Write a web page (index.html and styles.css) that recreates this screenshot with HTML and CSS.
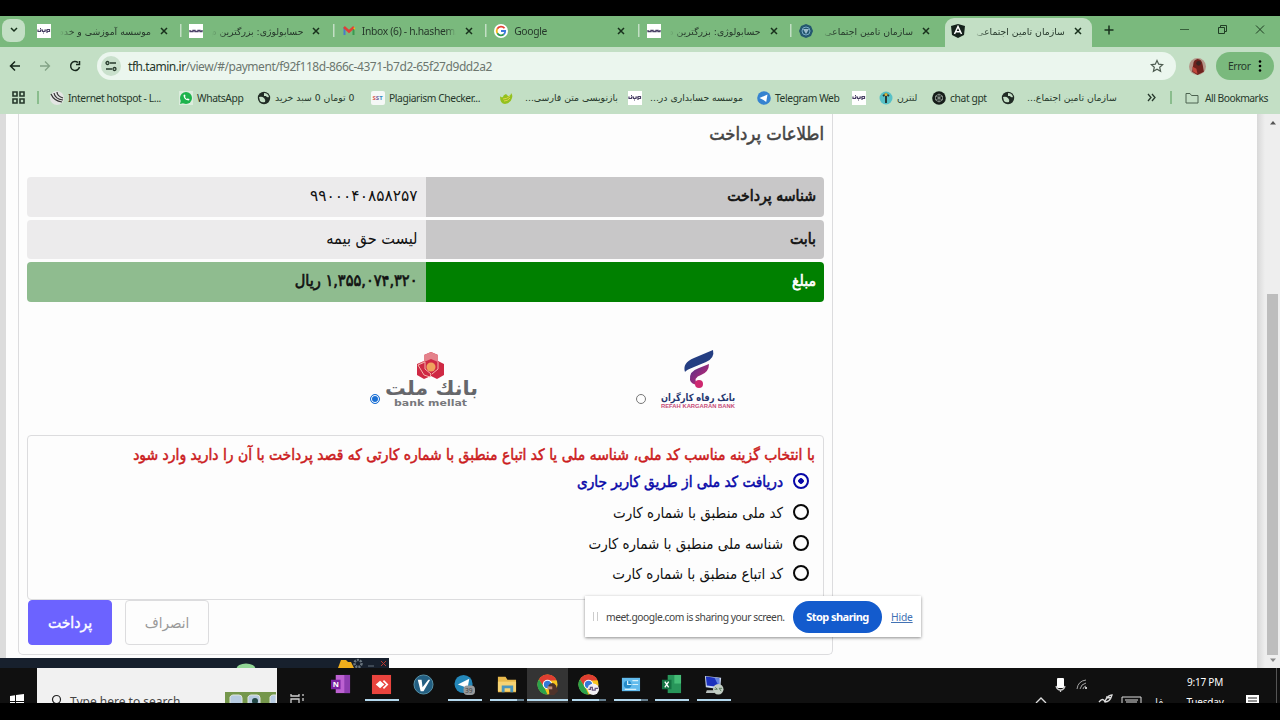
FILE: index.html
```
<!DOCTYPE html>
<html lang="fa">
<head>
	<meta charset="utf-8">
	<title>سازمان تامین اجتماعی</title>
	<link rel="stylesheet" href="styles.css">
</head>
<body>
	<svg class="defs">
		<symbol id="x" viewBox="0 0 8 8"><path d="M1 1l6 6M7 1L1 7" stroke="#18301c" stroke-width="1.5"/></symbol>
		<symbol id="mark" viewBox="0 0 14 14"><path fill="#fff" d="M0 0h14v14H0z"/><path d="M1 5.500v2h2.500V6h2v1.500H8V6h2v3M10 7.500h2.500v-2H10M3 4.500h1M6 9h1" fill="none" stroke="#4a4166" stroke-width="1.200"/></symbol>
		<symbol id="wordmark" viewBox="0 0 14 14"><path fill="#fff" d="M0 0h14v14H0z"/><path d="M1 6v1.500h3V6.500h2v1h3v-1h2v1h2V6" fill="none" stroke="#4a4166" stroke-width="1.300"/></symbol>
		<symbol id="globe" viewBox="0 0 14 14"><circle cx="7" cy="7" r="6.200" fill="#202b24"/><path d="M2 6q3-1 5 1t1 4q-3 1-5-1zM7 2q4 0 5 4-2 1-3-1H7z" fill="#c3dfc5"/></symbol>
		<symbol id="chrome" viewBox="0 0 22 22"><circle cx="11" cy="11" r="10.500" fill="#f7c51e"/><path d="M2 5.500A10.500 10.500 0 0 1 20.500 6.500L11 7 7 14z" fill="#df3e31"/><path d="M2 5.500L8 15l3 6.500A10.500 10.500 0 0 1 2 5.500z" fill="#2ba24c"/><circle cx="11" cy="11" r="5" fill="#fff"/><circle cx="11" cy="11" r="3.800" fill="#3479d8"/></symbol>
	</svg>
	<div class="screen">
		<div class="tabs">
			<div class="tab-menu"><svg width="8" height="6"><path d="M1 1l3 3 3-3" fill="none" stroke="#18301c" stroke-width="1.500"/></svg></div>
			<div class="tab first"><svg class="fav"><use href="#mark"/></svg><span class="title fa">موسسه آموزشی و خدم</span><svg class="x"><use href="#x"/></svg></div>
			<div class="tab"><svg class="fav"><use href="#wordmark"/></svg><span class="title fa">حسابولوژی: بزرگترین م</span><svg class="x"><use href="#x"/></svg></div>
			<div class="tab"><svg class="fav" viewBox="0 0 14 14"><path d="M2.500 11V3" stroke="#4a7bc8" stroke-width="2"/><path d="M11.500 11V3" stroke="#3a9a51" stroke-width="2"/><path d="M2 3l5 4.500L12 3" fill="none" stroke="#df4036" stroke-width="2.500"/><path d="M11 4l2-1v3" fill="#edb61e"/></svg><span class="title">Inbox (6) - h.hashem.</span><svg class="x"><use href="#x"/></svg></div>
			<div class="tab"><svg class="fav" viewBox="0 0 14 14"><circle cx="7" cy="7" r="7" fill="#fff"/><path d="M10.500 4.300A4.300 4.300 0 0 0 3.300 4.800" fill="none" stroke="#e44335" stroke-width="1.800"/><path d="M3.300 4.800a4.300 4.300 0 0 0 0 4.500" fill="none" stroke="#f3b81c" stroke-width="1.800"/><path d="M3.300 9.300a4.300 4.300 0 0 0 6.500 1" fill="none" stroke="#319b50" stroke-width="1.800"/><path d="M9.800 10.300Q11.300 9 11.200 7H7" fill="none" stroke="#3c79dc" stroke-width="1.800"/></svg><span class="title">Google</span><svg class="x"><use href="#x"/></svg></div>
			<div class="tab"><svg class="fav"><use href="#wordmark"/></svg><span class="title fa">حسابولوژی: بزرگترین م</span><svg class="x"><use href="#x"/></svg></div>
			<div class="tab"><svg class="fav" viewBox="0 0 14 14"><path d="M7 0l5 2 2 5-2 5-5 2-5-2-2-5 2-5z" fill="#24576f"/><circle cx="7" cy="7" r="4" fill="none" stroke="#78a9c7"/><path d="M4 5h6L7 10z" fill="#9bbccc"/></svg><span class="title fa">سازمان تامین اجتماعی</span><svg class="x"><use href="#x"/></svg></div>
			<div class="tab active"><svg class="fav" viewBox="0 0 14 14"><path d="M7 0l7 2-1 9-6 3-6-3-1-9z" fill="#15221c"/><path d="M3.500 10L7 2.500l3.500 7.500M5 7.700h4" fill="none" stroke="#fff" stroke-width="1.500"/></svg><span class="title fa">سازمان تامین اجتماعی</span><svg class="x"><use href="#x"/></svg></div>
			<svg class="newtab" viewBox="0 0 10 10"><path d="M5 .5v9M.5 5h9" stroke="#18301c" stroke-width="1.500"/></svg>
			<svg class="winbtns" width="84" height="12"><path d="M-1 5.500h9" stroke="#37603b"/><path d="M37.500 3.500h6v6h-6zM39.500 3V1.500h6v6H44M75 1.500l8 8M83 1.500l-8 8" fill="none" stroke="#203d24"/></svg>
		</div>
		<div class="toolbar">
			<svg class="nav" width="76" height="14"><path d="M11 7H1.500M6 2.500L1.500 7 6 11.500" fill="none" stroke="#15261a" stroke-width="1.500"/><path d="M31 7h9.500M36 2.500L40.500 7 36 11.500" fill="none" stroke="#83a386" stroke-width="1.300"/><path d="M69 3.500a4.500 4.500 0 1 0 1.500 4.500M70.500 2v3.500H67" fill="none" stroke="#15261a" stroke-width="1.500"/></svg>
			<div class="omnibox">
				<div class="site"><svg width="12" height="12"><path d="M5 3h6M1 9h6" stroke="#26382b" stroke-width="1.400"/><circle cx="2.500" cy="3" r="1.500" fill="none" stroke="#26382b" stroke-width="1.300"/><circle cx="9.500" cy="9" r="1.500" fill="none" stroke="#26382b" stroke-width="1.300"/></svg></div>
				<span class="url"><b>tfh.tamin.ir</b>/view/#/payment/f92f118d-866c-4371-b7d2-65f27d9dd2a2</span>
				<svg class="star" viewBox="0 0 14 14"><path d="M7 1.500l1.700 3.700 4 .4-3 2.700.9 4L7 10.200l-3.600 2.100.9-4-3-2.700 4-.4z" fill="none" stroke="#4d5b50" stroke-width="1.200"/></svg>
			</div>
			<svg class="avatar" viewBox="0 0 16 16"><circle cx="8" cy="8" r="8" fill="#b5998b"/><path d="M4 6q0-4 4-5 4 0 5 6l1 6-6 3-5-3z" fill="#70231e"/><circle cx="9" cy="5" r="2.200" fill="#3b2422"/><path d="M3 8l4 2 1 5-4-2z" fill="#c0483c"/></svg>
			<div class="error">Error<svg width="4" height="14"><circle cx="2" cy="2.500" r="1.300"/><circle cx="2" cy="7" r="1.300"/><circle cx="2" cy="11.500" r="1.300"/></svg></div>
		</div>
		<div class="bookmarks">
			<svg class="apps" width="13" height="13"><path d="M1 1h4v4H1zM8 1h4v4H8zM1 8h4v4H1zM8 8h4v4H8z" fill="none" stroke="#26382b" stroke-width="1.600"/></svg>
			<i class="line"></i>
			<div class="bm"><svg viewBox="0 0 14 14"><circle cx="7" cy="7" r="7" fill="#e3e5e3"/><path d="M1 3q3 7 11 8M4 2q1 6 9 7M7 1q0 4 6 6" fill="none" stroke="#333" stroke-width="1.200"/></svg><span>Internet hotspot - L...</span></div>
			<div class="bm"><svg viewBox="0 0 14 14"><path d="M0 0h14v14H0z" fill="#dcecdd"/><circle cx="7" cy="7" r="6" fill="#1db34c"/><path d="M1 13l1-4 3 3z" fill="#1db34c"/><path d="M4.500 4q0 5 5.500 5.500l.5-1.500L8.500 7.500 7.500 8 6 6l.5-1L6 3.500z" fill="#fff"/></svg><span>WhatsApp</span></div>
			<div class="bm"><svg><use href="#globe"/></svg><span class="fa">0 تومان 0 سبد خرید</span></div>
			<div class="bm"><svg viewBox="0 0 14 14"><rect width="14" height="14" rx="2" fill="#f5f8f6"/><text x="1.500" y="9" class="sst"><tspan fill="#d55c54">S</tspan><tspan fill="#726399">S</tspan><tspan fill="#368ac0">T</tspan></text></svg><span>Plagiarism Checker...</span></div>
			<div class="bm wide"><svg viewBox="0 0 14 14"><path d="M1 5q1 2 3 1 0-2 3-3l2 2q3 0 3-3 2 2 1 5-1 5-7 6-5 0-5-8z" fill="#94c11f"/><path d="M4 8q4 0 7-3M5 10q4 0 6-3" fill="none" stroke="#e0d34b"/></svg><span class="fa">بازنویسی متن فارسی...</span></div>
			<div class="bm mid"><svg><use href="#mark"/></svg><span class="fa">موسسه حسابداری در...</span></div>
			<div class="bm"><svg viewBox="0 0 14 14"><circle cx="7" cy="7" r="6.800" fill="#3583d0"/><path d="M2.500 7l8-3.500-1.300 7.500-2.700-2z" fill="#fff"/></svg><span>Telegram Web</span></div>
			<div class="bm"><svg><use href="#mark"/></svg></div>
			<div class="bm"><svg viewBox="0 0 14 14"><circle cx="7" cy="7" r="6.500" fill="#58c1c7"/><path d="M7 3v9M4 5l3-2 3 2" fill="none" stroke="#253c3b" stroke-width="2"/><circle cx="7" cy="3.500" r="1.500" fill="#dbb83d"/></svg><span class="fa">لنترن</span></div>
			<div class="bm"><svg viewBox="0 0 14 14"><circle cx="7" cy="7" r="6.800" fill="#151d19"/><path d="M7 3l3.500 2v4L7 11 3.500 9V5zM4 5l6 4M10 5L4 9M7 3v8" fill="none" stroke="#a7b1aa" stroke-width=".7"/></svg><span>chat gpt</span></div>
			<div class="bm wide"><svg><use href="#globe"/></svg><span class="fa">سازمان تامین اجتماع...</span></div>
			<svg width="9" height="9"><path d="M1 1l3 3.500L1 8M5 1l3 3.500L5 8" fill="none" stroke="#26382b" stroke-width="1.300"/></svg>
			<i class="line"></i>
			<svg width="14" height="12"><path d="M1 1.500h4l1.500 2H13v7.500H1z" fill="none" stroke="#4c6350"/></svg>
			<span class="all">All Bookmarks</span>
		</div>
		<div class="page">
			<main class="card" dir="rtl">
				<h1>اطلاعات پرداخت</h1>
				<div class="row"><div class="name">شناسه پرداخت</div><div class="value number">۹۹۰۰۰۴۰۸۵۸۲۵۷</div></div>
				<div class="row"><div class="name">بابت</div><div class="value">لیست حق بیمه</div></div>
				<div class="row total"><div class="name">مبلغ</div><div class="value">۱,۳۵۵,۰۷۴,۳۲۰ ریال</div></div>
				<div class="banks">
					<label class="bank refah">
						<svg width="76" height="62" direction="ltr">
							<defs><linearGradient id="rg" x2="1" y2="1"><stop stop-color="#4a338c"/><stop offset="1" stop-color="#d9246d"/></linearGradient></defs>
							<path d="M25 23Q22 14 34 9L53 1q2 8-7 12L34 18q-8 3-9 5z" fill="#243e82"/>
							<path d="M30 31q-1-9 9-12l10-4q0 8-8 11-8 2-4 10-6-1-7-5z" fill="url(#rg)"/><circle cx="39" cy="35" r="4" fill="#ce286f"/>
							<text x="1" y="52" textLength="74" lengthAdjust="spacingAndGlyphs" class="refah-fa">بانک رفاه کارگران</text>
							<text x="1" y="59" textLength="74" lengthAdjust="spacingAndGlyphs" class="refah-en">REFAH KARGARAN BANK</text>
						</svg>
						<span class="radio"></span>
					</label>
					<label class="bank mellat">
						<svg width="96" height="60" direction="ltr">
							<path d="M40 3l7-3 7 3v6l6 3v11l-7 4-6-3-7 3-7-4V12l7-3z" fill="#cf2944"/><path d="M40 3l7-3 7 3v7l-7-3-7 3-7 3 7-4z" fill="#e4828b"/><path d="M34 13l7-3v7l6 5-1 3-6-2zM54 10v7l-6 5" fill="none" stroke="#f4b4ac"/><circle cx="47" cy="15" r="4.500" fill="#f0a35d"/>
							<text x="1" y="43" textLength="93" lengthAdjust="spacingAndGlyphs" class="mellat-fa">بانك ملت</text>
							<text x="10" y="54" textLength="73" lengthAdjust="spacingAndGlyphs" class="mellat-en">bank mellat</text>
						</svg>
						<span class="radio on"></span>
					</label>
				</div>
				<div class="codes">
					<p>با انتخاب گزینه مناسب کد ملی، شناسه ملی یا کد اتباع منطبق با شماره کارتی که قصد پرداخت با آن را دارید وارد شود</p>
					<label class="code on"><i></i><span>دریافت کد ملی از طریق کاربر جاری</span></label>
					<label class="code"><i></i><span>کد ملی منطبق با شماره کارت</span></label>
					<label class="code"><i></i><span>شناسه ملی منطبق با شماره کارت</span></label>
					<label class="code"><i></i><span>کد اتباع منطبق با شماره کارت</span></label>
				</div>
				<div class="actions"><button class="cancel">انصراف</button><button class="pay">پرداخت</button></div>
			</main>
			<div class="scroll"><svg width="8" height="5"><path d="M1 4.500h6L4 1z" fill="#555"/></svg><i></i><svg width="8" height="5"><path d="M1 .5h6L4 4z" fill="#888"/></svg></div>
			<div class="share"><i class="grip"></i><span>meet.google.com is sharing your screen.</span><b>Stop sharing</b><a>Hide</a></div>
			<svg class="recorder" width="389" height="10"><path d="M0 0h389v10H0z" fill="#17202d"/><ellipse cx="246" cy="11" rx="9.500" ry="5.500" fill="#92d695"/><path d="M338 10l3-8h5l2 2h3l3 6z" fill="#f0ae1c"/><circle cx="358" cy="5.500" r="3.500" fill="none" stroke="#6b7780" stroke-width="2.500" stroke-dasharray="2 1"/><path d="M368 8h6" stroke="#65717d"/><path d="M381 3l5 5M386 3l-5 5" stroke="#b8382f"/></svg>
		</div>
		<div class="taskbar">
			<svg class="start" width="37" height="35"><path d="M10 28l5-.8V33h-5zM16 27l8-1v7h-8zM10 34h5v5h-5zM16 34h8v6h-8z" fill="#fff"/></svg>
			<div class="search"><svg class="lens" width="12" height="14"><circle cx="6.500" cy="5.500" r="4" fill="none" stroke="#222" stroke-width="1.200"/><path d="M4 9l-3 4" stroke="#222"/></svg><span>Type here to search</span><svg width="51" height="12"><path d="M0 0h51v12H0z" fill="#75974c"/><path d="M5 12V5q1-2 3-2h6q3 0 3 3v6zM23 12V5q1-2 3-2h6q3 0 3 3v6zM45 12V5q1-2 3-2h3v9z" fill="#b7cbe1" stroke="#e1e6df"/><circle cx="30" cy="9" r="3" fill="#234846"/></svg></div>
			<svg class="taskview" width="16" height="10"><path d="M1 0v2h8V0M1 10V5h8v5M13 0v2M13 4v3M13 9v2" fill="none" stroke="#d0d0d0" stroke-width="1.300"/></svg>
			<div class="apps-run">
				<div class="app idle"><svg viewBox="0 0 22 22"><path d="M6 1h15v19H6z" fill="#bc61d1"/><path d="M15 1h6v19h-6z" fill="#8e3db0"/><path d="M1 6h10v10H1z" fill="#7922a0"/><text x="3" y="14" class="on-n">N</text></svg></div>
				<div class="app"><svg viewBox="0 0 22 22"><path d="M1 1h20v20H1z" fill="#e9443e"/><path d="M5 11l4.500-4 4.500 4-4.500 4z" fill="#fff"/><path d="M13 7l4 4-4 4" fill="none" stroke="#fff" stroke-width="1.800"/></svg></div>
				<div class="app idle"><svg viewBox="0 0 22 22"><circle cx="11" cy="11" r="10" fill="#235f82" stroke="#5994aa"/><path d="M5 6h4l1 8 6-8h2l-7 12H8z" fill="#fff"/></svg></div>
				<div class="app"><svg viewBox="0 0 22 22"><circle cx="10" cy="10.500" r="9.500" fill="#2487b9"/><path d="M4 11l12-6-2 11-4-3z" fill="#fff"/><rect x="10" y="12" width="12" height="10" rx="4" fill="#979a9c"/><text x="11.500" y="20" class="badge">39</text></svg></div>
				<div class="app two"><svg viewBox="0 0 22 22"><path d="M2 3h8l2 3h9v13H2z" fill="#e8b94c"/><path d="M2 8h19v10H2z" fill="#f6d373"/><path d="M6 12h12v7h-3v-4H9v4H6z" fill="#4a96be"/></svg></div>
				<div class="app current"><svg viewBox="0 0 22 22"><use href="#chrome"/><path d="M12 12q4-5 8 0l2 6-4 4h-5z" fill="#4f332b"/><path d="M11 13h5v3h-5z" fill="#c18c78"/></svg></div>
				<div class="app two"><svg viewBox="0 0 22 22"><use href="#chrome"/><circle cx="16" cy="16" r="6" fill="#f3f0f3"/><path d="M11 16h2v-2h2v3h3v-2h3" fill="none" stroke="#65547c" stroke-width="1.300"/></svg></div>
				<div class="app two"><svg viewBox="0 0 22 22"><path d="M2 4h19v14H2z" fill="#62bbed"/><circle cx="8" cy="11" r="4" fill="#268bc8"/><path d="M8 7v4h4M13 7h6M13 11h6M5 16h12" fill="none" stroke="#d4f0fa" stroke-width="1.300"/></svg></div>
				<div class="app"><svg viewBox="0 0 22 22"><path d="M7 1h14v19H7z" fill="#28965a"/><path d="M14 1h7v9h-7z" fill="#45bd76"/><path d="M1 6h10v10H1z" fill="#147342"/><path d="M4 8l4 6M8 8l-4 6" stroke="#fff" stroke-width="1.400"/></svg></div>
				<div class="app"><svg viewBox="0 0 22 22"><path d="M2 2l17 2-1 12-15-2z" fill="#c8d6f0"/><path d="M3 2.500l14 2v9L4 12z" fill="#1c31bd"/><path d="M12 4l5 .5v9z" fill="#6585df"/><path d="M4 17h9l-1 3H3z" fill="#b8c0bd"/><circle cx="16" cy="16" r="5.500" fill="#c3cec4"/><path d="M12 16h3l-2-2M20 15h-3l2 3" fill="none" stroke="#567a58"/></svg></div>
			</div>
			<svg class="tray" width="136" height="35">
				<rect x="28" y="10" width="7" height="10" rx="1" fill="#fff"/><path d="M27 18q1 4 4.500 4t4.500-4M31.500 22v2" fill="none" stroke="#ccc" stroke-width="1.300"/>
				<path d="M48 21q1-8 9-9M51 21q1-5 6-6M54 21q0-2 3-3" fill="none" stroke="#a5a5a5"/><circle cx="57" cy="20" r="1" fill="#fff"/>
				<path d="M7 35l5-5 5 5M70 34q4-5 6 0 5 0 7-7-4 0-7 6M77 29l5 1" fill="none" stroke="#ddd" stroke-width="1.300"/><path d="M93 36v-7h19v7M96 32h13M97 34h11" fill="none" stroke="#ddd"/><text x="126" y="38" class="lang">فا</text>
			</svg>
			<div class="clock"><span>9:17 PM</span><span>Tuesday</span></div>
			<svg class="note" width="37" height="35"><path d="M3 27h13v10H3z" fill="#fff"/><path d="M5 30h9M5 33h9" stroke="#222"/><path d="M33.500 0v35" stroke="#555"/></svg>
		</div>
	</div>
</body>
</html>
```
FILE: styles.css
```
* {
	box-sizing: border-box;
}

body {
	margin: 0;
	height: 720px;
	padding: 16px 0 17px;
	background: #000;
	overflow: hidden;
	font-family: "Noto Sans", "Open Sans", sans-serif;
	font-size: 10.3px;
	letter-spacing: -.4px;
	color: #26382b;
}

svg {
	display: block;
	flex: none;
}

.defs {
	position: absolute;
	width: 0;
	height: 0;
}

.fa {
	font-family: "DejaVu Sans", sans-serif;
	letter-spacing: 0;
	direction: rtl;
}

.screen {
	width: 1280px;
	height: 687px;
	display: flex;
	flex-direction: column;
	overflow: hidden;
}

/* browser */
.tabs {
	height: 31px;
	flex: none;
	display: flex;
	align-items: center;
	background: #7ab97d;
	padding-left: 2px;
}

.tab-menu {
	width: 23px;
	height: 23px;
	margin: 0 3px 3px 0;
	border-radius: 8px;
	background: #c3dfc5;
	display: flex;
	align-items: center;
	justify-content: center;
}

.tab {
	width: 152.4px;
	height: 28px;
	flex: none;
	display: flex;
	align-items: center;
	padding: 0 0 1px 9px;
	background: linear-gradient(#c3dfc5, #c3dfc5) 0 6px / 1.5px 13px no-repeat;
}

.tab.first {
	background: none;
}

.tab .fav {
	width: 14px;
	height: 14px;
}

.title {
	width: 94px;
	margin: 0 9px 0 6px;
	white-space: nowrap;
	letter-spacing: -.3px;
	-webkit-mask-image: linear-gradient(to left, transparent, #000 10px);
}

.title.fa {
	width: 91px;
	margin: 0 9px;
	font-size: 9.3px;
	letter-spacing: 0;
	-webkit-mask-image: linear-gradient(to right, transparent, #000 14px);
}

.tab .x {
	width: 8px;
	height: 8px;
}

.tab.active {
	width: 147px;
	height: 29px;
	margin: 2px 0 0 2.500px;
	padding: 0 0 3px 6px;
	border-radius: 9px 9px 0 0;
	background: #c3dfc5;
}

.newtab {
	width: 10px;
	height: 10px;
	margin: 0 67px 3px 12px;
}

.winbtns {
	margin-bottom: 3px;
	overflow: visible;
}

.toolbar {
	height: 36px;
	flex: none;
	display: flex;
	align-items: center;
	padding: 2px 5px 0 9px;
	background: #c3dfc5;
}

.nav {
	margin-right: 12px;
}

.omnibox {
	width: 1079px;
	height: 28px;
	border-radius: 14px;
	background: #ebf6ee;
	display: flex;
	align-items: center;
	padding: 0 12px 0 4px;
}

.site {
	width: 20px;
	height: 20px;
	border-radius: 50%;
	background: #c9e0cc;
	display: flex;
	align-items: center;
	justify-content: center;
}

.url {
	margin-left: 7px;
	flex: 1;
	font-size: 12px;
	letter-spacing: -.45px;
	color: #6c766f;
}

.url b {
	font-weight: 400;
	color: #26382b;
}

.star {
	width: 14px;
	height: 14px;
}

.avatar {
	width: 17px;
	height: 17px;
	margin: 0 10px 0 13px;
}

.error {
	width: 58px;
	height: 28px;
	border-radius: 14px;
	background: #7ab97d;
	display: flex;
	align-items: center;
	justify-content: space-between;
	padding: 0 12px;
}

.bookmarks {
	height: 31px;
	flex: none;
	display: grid;
	grid-template-columns: 25px 13px 129px 78px 114px 128px 129px 129px 95px 27px 53px 69px 146px 23px 15px 20px 1fr;
	align-items: center;
	padding: 0 0 2px 12px;
	background: #c3dfc5;
}

.line {
	width: 1.5px;
	height: 13px;
	background: #8abd8d;
}

.bm {
	display: flex;
	align-items: center;
	gap: 4px;
	white-space: nowrap;
}

.bm svg {
	width: 14px;
	height: 14px;
}

.bm .fa {
	font-size: 9.300px;
}

.bm.wide {
	gap: 12px;
}

.bm.mid {
	gap: 8px;
}

.sst {
	font-size: 6px;
	font-weight: 700;
	letter-spacing: 0;
}

.all {
	letter-spacing: -.500px;
}

/* payment page */
.page {
	position: relative;
	height: 554px;
	flex: none;
	background: #fdfdfd;
	border-left: 6px solid #dcdcdc;
	display: flex;
	justify-content: space-between;
	padding-left: 12px;
}

.card {
	width: 815px;
	height: 541px;
	border: 1px solid #dcdcde;
	border-top: 0;
	border-radius: 0 0 5px 5px;
	padding: 0 8px;
	font-family: "DejaVu Sans Condensed", "DejaVu Sans", sans-serif;
	letter-spacing: 0;
	color: #111;
	font-size: 15px;
}

h1 {
	height: 63px;
	margin: 0;
	padding-top: 8px;
	line-height: 24px;
	font-size: 18.300px;
	font-weight: 400;
	-webkit-text-stroke: .5px;
	color: #444;
}

.row {
	height: 39.500px;
	margin-bottom: 3px;
	display: flex;
	line-height: 38px;
	border-radius: 4px;
	overflow: hidden;
}

.name,
.value {
	width: 50%;
	padding: 0 8px;
	background: #c8c7c8;
	font-size: 15.700px;
	-webkit-text-stroke: .6px;
}

.value {
	background: #ecebec;
	font-size: 16.200px;
	-webkit-text-stroke: 0;
}

.value.number {
	font-family: "DejaVu Sans", sans-serif;
	font-size: 15.400px;
}

.total .name {
	background: #008000;
	color: #fff;
}

.total .value {
	background: #8fbc8f;
	-webkit-text-stroke: .6px;
}

.banks {
	height: 130.500px;
	display: flex;
	padding: 45px 88px 0 0;
	gap: 156px;
}

.bank {
	display: flex;
	height: 60px;
	align-items: flex-end;
	gap: 14px;
}

.refah svg {
	margin-bottom: -1px;
}

.mellat {
	gap: 4px;
}

.mellat svg {
	margin-bottom: -2px;
}

.radio {
	width: 10px;
	height: 10px;
	margin-bottom: 6px;
	border: 1px solid #777;
	border-radius: 50%;
}

.radio.on {
	border-color: #1b70d4;
	background: #1b70d4;
	box-shadow: inset 0 0 0 1px #fff;
}

.refah-fa {
	font: 700 10px "DejaVu Sans", sans-serif;
	fill: #24356f;
}

.refah-en {
	font: 700 5.500px "Liberation Sans", sans-serif;
	fill: #c74b78;
}

.mellat-fa {
	font: 700 20px "DejaVu Sans", sans-serif;
	fill: #66676b;
}

.mellat-en {
	font: 700 9px "DejaVu Sans", sans-serif;
	fill: #77787c;
}

.codes {
	height: 165px;
	border: 1px solid #dcdcde;
	border-radius: 4px;
	padding: 8px;
}

.codes p {
	margin: 0 0 3px;
	line-height: 22px;
	height: 23px;
	font-size: 15.480px;
	-webkit-text-stroke: .5px;
	color: #cb1b20;
	white-space: nowrap;
}

.code {
	height: 30.800px;
	display: flex;
	gap: 10px;
	padding-right: 6px;
	line-height: 25px;
}

.code i {
	width: 16px;
	height: 16px;
	margin-top: 3px;
	border: 2.500px solid #080808;
	border-radius: 50%;
}

.code.on {
	color: #0808a8;
	font-size: 15.200px;
	-webkit-text-stroke: .5px;
}

.code.on i {
	border-color: #0808a8;
	background: radial-gradient(#0808a8 2.5px, transparent 3px);
}

.actions {
	direction: ltr;
	display: flex;
	flex-direction: row-reverse;
	justify-content: flex-end;
	gap: 13px;
	padding-left: 1px;
}

button {
	width: 84px;
	height: 45px;
	border-radius: 4px;
	border: 1px solid #dcdcde;
	background: #fdfdfd;
	color: #999;
	font: 15px "DejaVu Sans Condensed", "DejaVu Sans", sans-serif;
}

.pay {
	border-color: #6c63ff;
	background: #6c63ff;
	color: #fff;
	font-size: 15.600px;
	-webkit-text-stroke: .4px;
}

.scroll {
	width: 23px;
	display: flex;
	flex-direction: column;
	align-items: flex-end;
	padding: 6px 3px 5px 0;
	background: linear-gradient(to right, #d8d8d8, #eee 8px);
}

.scroll i {
	width: 11px;
	height: 361px;
	margin: auto -1px 3px 0;
	background: #bdbdbd;
}

.share {
	position: absolute;
	left: 579px;
	top: 482px;
	width: 336px;
	height: 41px;
	background: #fff;
	box-shadow: 0 1px 3px rgba(0, 0, 0, .45);
	display: flex;
	align-items: center;
	padding-left: 8px;
	white-space: nowrap;
	color: #444;
}

.grip {
	width: 5px;
	height: 9px;
	margin-right: 8px;
	border: solid #ccc;
	border-width: 0 1.5px;
}

.share span {
	width: 187px;
	letter-spacing: -.46px;
}

.share b {
	width: 89px;
	height: 32px;
	border-radius: 16px;
	background: #135bcd;
	color: #fff;
	font-size: 11px;
	letter-spacing: -.55px;
	line-height: 31px;
	text-align: center;
}

.share a {
	margin-left: 9px;
	letter-spacing: -.2px;
	color: #4272b4;
	text-decoration: underline;
}

.recorder {
	position: absolute;
	left: -6px;
	bottom: 0;
}

/* windows taskbar */
.taskbar {
	height: 35px;
	display: flex;
	background: #101010;
	color: #fff;
	overflow: hidden;
	letter-spacing: 0;
}

.search {
	width: 240px;
	background: #f1f1f1;
	color: #444;
	display: flex;
	align-items: flex-start;
	font-size: 12px;
	padding-left: 13px;
}

.search span {
	width: 118px;
	margin: 25px 37px 0 8px;
	line-height: 17px;
	white-space: nowrap;
}

.search svg {
	margin-top: 24px;
}

.search .lens {
	margin-top: 26px;
}

.taskview {
	margin: 26px 15px 0 13px;
}

.apps-run {
	display: flex;
	width: 413px;
	margin-left: -1px;
}

.app {
	width: 41.400px;
	flex: none;
	height: 35px;
	padding: 6px 0 0 10px;
	background: linear-gradient(#b4d9ee, #b4d9ee) 4px 31px / 34px 2px no-repeat;
}

.app svg {
	width: 21px;
	height: 21px;
}

.app.idle {
	background: none;
}

.app.two {
	background-image: linear-gradient(to right, #b4d9ee 27px, #668090 27px);
}

.app.current {
	background: linear-gradient(#b4d9ee, #b4d9ee) 0 31px / 41px 2px no-repeat #343434;
}

.on-n {
	font-size: 8px;
	font-weight: 700;
	fill: #fff;
}

.badge {
	font-size: 7px;
	fill: #444;
}

.tray {
	margin-left: auto;
}

.lang {
	font: 11px "DejaVu Sans", sans-serif;
	fill: #ddd;
}

.clock {
	width: 78px;
	display: flex;
	flex-direction: column;
	align-items: center;
	padding: 4px 0 0 2px;
	line-height: 20px;
	font-size: 10px;
	letter-spacing: -.2px;
}
```
